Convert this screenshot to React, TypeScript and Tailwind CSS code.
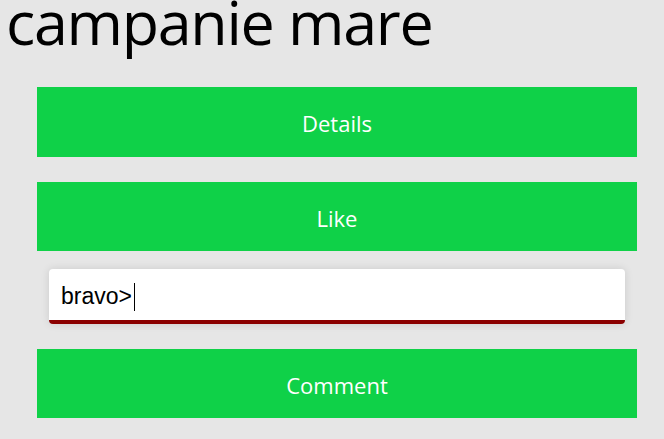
import { useState } from 'react';

export default function App() {
  const [comment, setComment] = useState('bravo>');

  return (
    <div className="min-h-screen bg-[#e6e6e6] overflow-hidden">
      <h1 className="pl-[6px] text-[61px] leading-[44px] tracking-[-1.3px] font-normal text-black font-['Open_Sans',sans-serif]">
        campanie mare
      </h1>

      <div className="mt-[43px] ml-[37px] w-[600px] flex flex-col">
        {/* Details */}
        <button className="h-[70px] pt-[3px] bg-[#0fd148] text-white text-[22px] font-['Open_Sans',sans-serif]">
          Details
        </button>

        {/* Like */}
        <button className="mt-[25px] h-[69px] pt-[3px] bg-[#0fd148] text-white text-[22px] font-['Open_Sans',sans-serif]">
          Like
        </button>

        {/* Comment box */}
        <div className="mt-[18px] mx-[12px] relative">
          <input
            value={comment}
            onChange={(e) => setComment(e.target.value)}
            autoFocus
            className="w-full h-[55px] px-[12px] pt-[4px] bg-white rounded-[4px] border-b-[4px] border-[#8b0000] shadow-[0_0_8px_rgba(0,0,0,0.12)] outline-none text-[23px] text-black caret-black font-['Liberation_Sans',Arial,sans-serif]"
          />
          <span className="absolute left-[85px] top-[14px] w-px h-[28px] bg-black pointer-events-none" />
        </div>

        {/* Comment */}
        <button className="mt-[25px] h-[69px] pt-[3px] bg-[#0fd148] text-white text-[22px] font-['Open_Sans',sans-serif]">
          Comment
        </button>
      </div>
    </div>
  );
}
